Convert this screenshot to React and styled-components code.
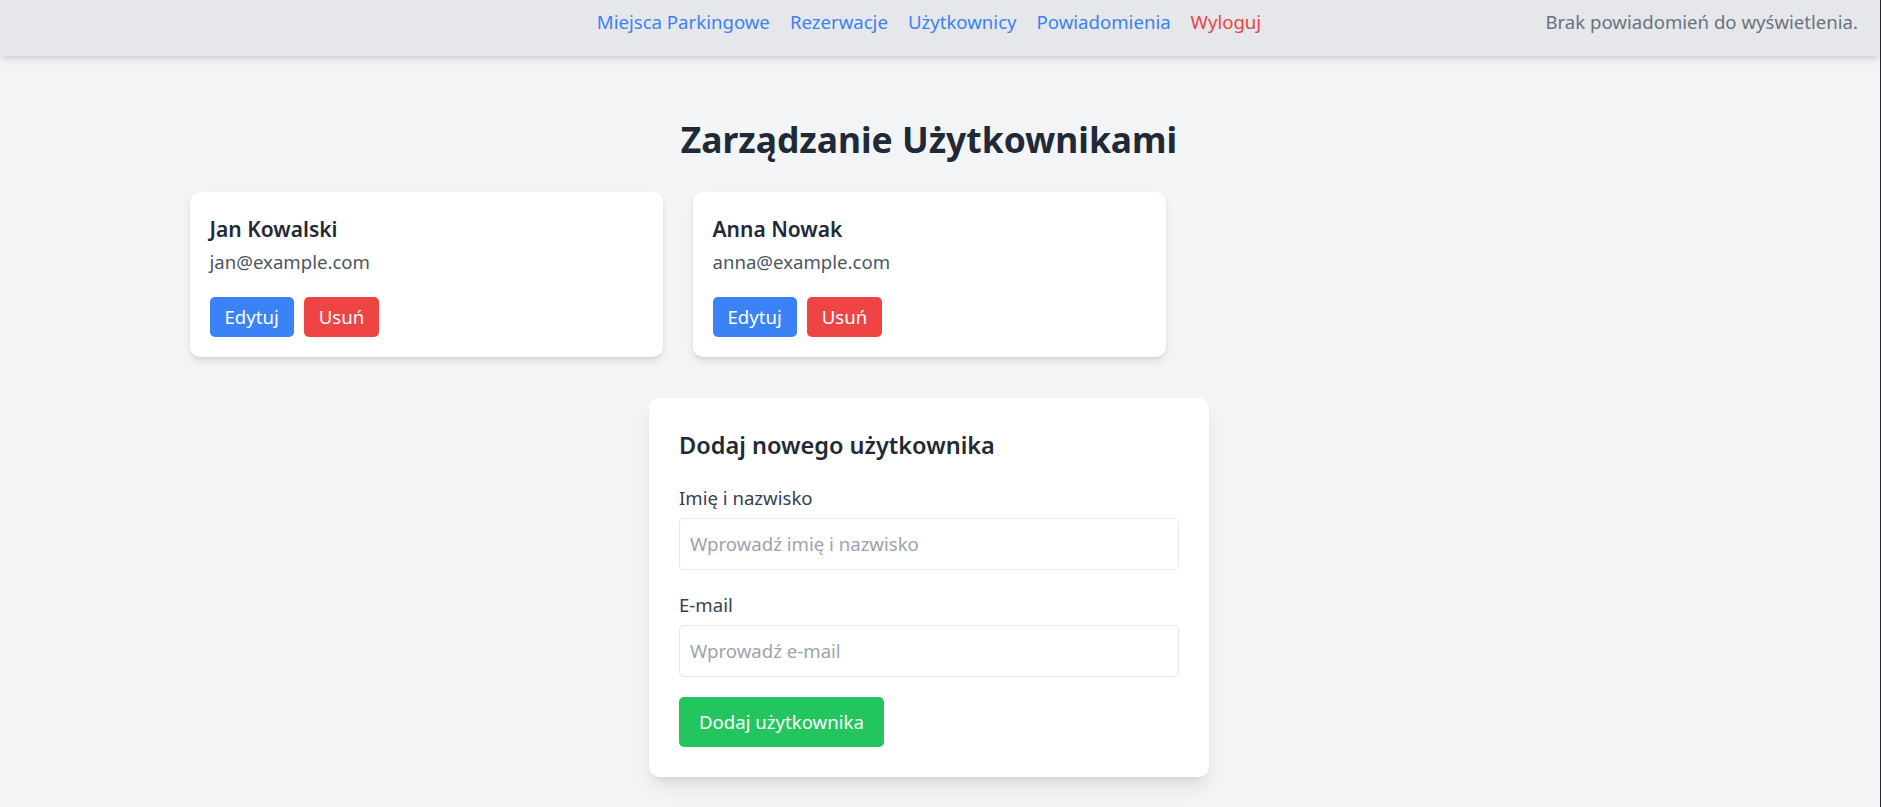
import React from 'react';
import styled, { createGlobalStyle } from 'styled-components';

const font = `"Noto Sans", "Open Sans", "DejaVu Sans", sans-serif`;

const GlobalStyle = createGlobalStyle`
  html, body {
    margin: 0;
    padding: 0;
  }
  body {
    background: #f3f4f6;
    font-family: ${font};
    -webkit-font-smoothing: antialiased;
  }
  #root {
    min-height: 100vh;
    border-right: 1px solid #26282c;
    box-sizing: border-box;
  }
`;

const Nav = styled.nav`
  height: 56px;
  box-sizing: border-box;
  padding: 7px 22px 0 0;
  background: #e5e7eb;
  box-shadow: 0 5px 8px -1px rgba(0, 0, 0, 0.1), 0 2px 5px -2px rgba(0, 0, 0, 0.1);
  display: grid;
  grid-template-columns: 1fr auto 1fr;
  align-items: start;
  position: relative;
  z-index: 1;
`;

const Links = styled.div`
  grid-column: 2;
  display: flex;
  gap: 20px;
`;

const NavLink = styled.a`
  color: ${p => (p.$danger ? '#ef4444' : '#3b82f6')};
  text-decoration: none;
  font-size: 18.6px;
  line-height: 30px;
  cursor: pointer;
`;

const Notice = styled.p`
  justify-self: end;
  margin: 0;
  color: #6b7280;
  font-size: 18.6px;
  line-height: 30px;
`;

const Main = styled.main`
  padding: 61px 22px 40px 0;
`;

const Title = styled.h1`
  margin: 0 0 30px;
  text-align: center;
  color: #1f2937;
  font-size: 35.4px;
  line-height: 45px;
  font-weight: 700;
`;

const Grid = styled.div`
  width: 1479px;
  margin: 0 auto;
  display: grid;
  grid-template-columns: repeat(3, 1fr);
  gap: 30px;
`;

const Card = styled.div`
  background: #fff;
  border-radius: 10px;
  padding: 20px;
  box-shadow: 0 5px 8px -1px rgba(0, 0, 0, 0.1), 0 2px 5px -2px rgba(0, 0, 0, 0.1);
`;

const Name = styled.h3`
  margin: 0;
  color: #1f2937;
  font-size: 21px;
  line-height: 35px;
  font-weight: 600;
`;

const Email = styled.p`
  margin: 0;
  color: #4b5563;
  font-size: 18.6px;
  line-height: 30px;
`;

const Actions = styled.div`
  display: flex;
  gap: 10px;
  margin-top: 20px;
`;

const Button = styled.button`
  border: none;
  border-radius: 5px;
  color: #fff;
  font-family: ${font};
  font-size: 18.6px;
  line-height: 30px;
  padding: ${p => (p.$large ? '10px 20px' : '5px 15px')};
  background: ${p => p.$color};
  cursor: pointer;
`;

const FormCard = styled.form`
  width: 560px;
  box-sizing: border-box;
  margin: 41px auto 0;
  padding: 30px;
  background: #fff;
  border-radius: 10px;
  box-shadow: 0 12px 19px -4px rgba(0, 0, 0, 0.1), 0 5px 8px -5px rgba(0, 0, 0, 0.1);
`;

const FormTitle = styled.h2`
  margin: 0 0 20px;
  color: #1f2937;
  font-size: 23.5px;
  line-height: 35px;
  font-weight: 600;
`;

const Field = styled.div`
  margin-bottom: 20px;
`;

const Label = styled.label`
  display: block;
  margin-bottom: 5px;
  color: #374151;
  font-size: 18.6px;
  line-height: 30px;
`;

const Input = styled.input`
  display: block;
  width: 100%;
  box-sizing: border-box;
  padding: 10px;
  border: 1px solid #e5e7eb;
  border-radius: 5px;
  font-family: ${font};
  font-size: 18.6px;
  line-height: 30px;
  color: #1f2937;
  outline: none;
  &::placeholder {
    color: #9ca3af;
  }
`;

const users = [
  { name: 'Jan Kowalski', email: 'jan@example.com' },
  { name: 'Anna Nowak', email: 'anna@example.com' },
];

export default function App() {
  return (
    <>
      <GlobalStyle />
      <Nav>
        <Links>
          <NavLink>Miejsca Parkingowe</NavLink>
          <NavLink>Rezerwacje</NavLink>
          <NavLink>Użytkownicy</NavLink>
          <NavLink>Powiadomienia</NavLink>
          <NavLink $danger>Wyloguj</NavLink>
        </Links>
        <Notice>Brak powiadomień do wyświetlenia.</Notice>
      </Nav>
      <Main>
        <Title>Zarządzanie Użytkownikami</Title>
        <Grid>
          {users.map(u => (
            <Card key={u.email}>
              <Name>{u.name}</Name>
              <Email>{u.email}</Email>
              <Actions>
                <Button $color="#3b82f6">Edytuj</Button>
                <Button $color="#ef4444">Usuń</Button>
              </Actions>
            </Card>
          ))}
        </Grid>
        <FormCard onSubmit={e => e.preventDefault()}>
          <FormTitle>Dodaj nowego użytkownika</FormTitle>
          <Field>
            <Label>Imię i nazwisko</Label>
            <Input placeholder="Wprowadź imię i nazwisko" />
          </Field>
          <Field>
            <Label>E-mail</Label>
            <Input type="email" placeholder="Wprowadź e-mail" />
          </Field>
          <Button type="submit" $large $color="#22c55e">Dodaj użytkownika</Button>
        </FormCard>
      </Main>
    </>
  );
}
